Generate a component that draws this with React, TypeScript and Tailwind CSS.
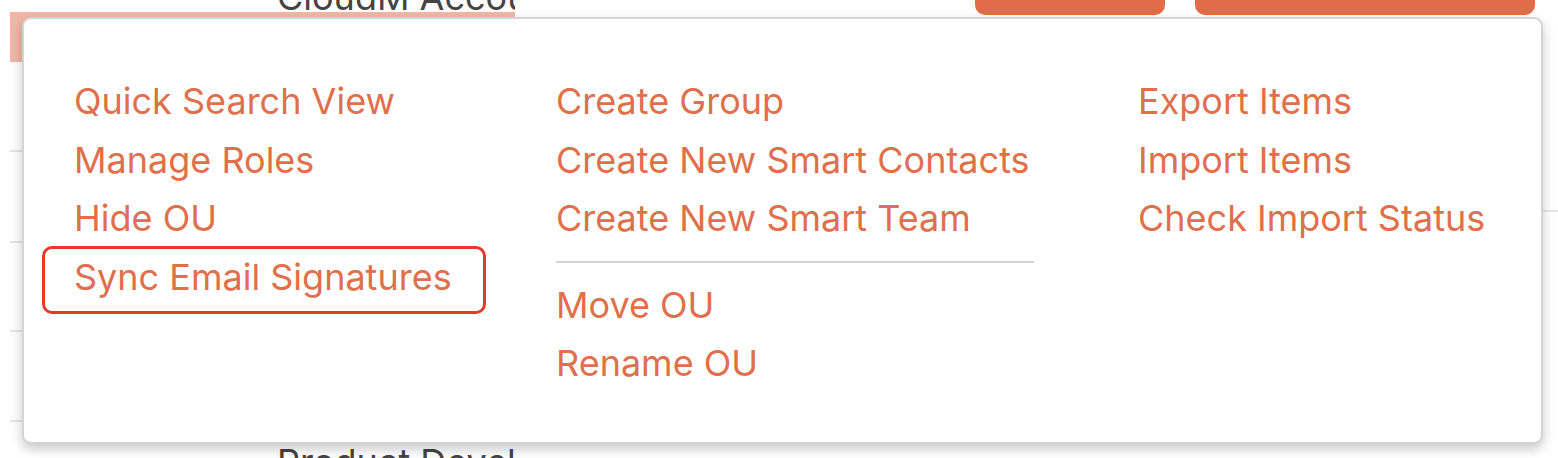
import React from 'react';

const columns: { items: string[]; after?: string[] }[] = [
  { items: ['Quick Search View', 'Manage Roles', 'Hide OU', 'Sync Email Signatures'] },
  {
    items: ['Create Group', 'Create New Smart Contacts', 'Create New Smart Team'],
    after: ['Move OU', 'Rename OU'],
  },
  { items: ['Export Items', 'Import Items', 'Check Import Status'] },
];

const widths = ['w-[482px]', 'w-[582px]', 'w-[360px]'];

function MenuItem({ label }: { label: string }) {
  const highlighted = label === 'Sync Email Signatures';
  return (
    <div className="relative h-[58.5px] flex items-center">
      {highlighted && (
        <div className="absolute left-[-32px] top-[-2px] w-[444px] h-[68px] rounded-[10px] border-[3px] border-[#e5392a]" />
      )}
      <span className="text-[36px] leading-none text-[#e06f4b] whitespace-nowrap">{label}</span>
    </div>
  );
}

export default function App() {
  return (
    <div
      className="relative w-[1558px] h-[458px] overflow-hidden bg-white"
      style={{ fontFamily: 'Inter, "Noto Sans", sans-serif' }}
    >
      {/* page behind the menu */}
      <div className="flex h-[62px]">
        <div className="relative ml-[10px] mt-[12px] w-[505px] h-[50px] bg-[#f1b7a6]">
          <div className="absolute left-[267px] top-[-33px] w-[238px] overflow-hidden text-[36px] leading-none text-[#444] whitespace-nowrap">CloudM Account</div>
        </div>
        <div className="ml-[460px] w-[190px] h-[15px] rounded-b-[10px] bg-[#e06d48]" />
        <div className="ml-[30px] w-[340px] h-[15px] rounded-b-[10px] bg-[#e06d48]" />
      </div>
      <div className="flex">
        <div className="ml-[10px] w-[505px] overflow-hidden">
          <div className="h-[90px] border-b-2 border-[#e4e4e4]" />
          <div className="h-[91px] border-b-2 border-[#e4e4e4]" />
          <div className="h-[89px] border-b-2 border-[#e4e4e4]" />
          <div className="h-[90px] border-b-2 border-[#e4e4e4]" />
          <div className="pl-[267px] pt-[22px] text-[36px] leading-none text-[#444] whitespace-nowrap">Product Development</div>
        </div>
        <div className="ml-auto w-[20px]">
          <div className="h-[150px] border-b-2 border-[#e8e8e8]" />
        </div>
      </div>

      {/* dropdown menu */}
      <div className="absolute left-[22px] top-[17px] w-[1521px] h-[427px] rounded-[9px] border-2 border-[#d4d4d4] bg-white shadow-[0_5px_12px_rgba(0,0,0,0.22)] pl-[50px] pt-[53px]">
        <div className="flex">
          {columns.map((col, i) => (
            <div key={i} className={widths[i]}>
              {col.items.map((label) => (
                <MenuItem key={label} label={label} />
              ))}
              {col.after && (
                <>
                  <div className="my-[13px] w-[478px] h-[2px] bg-[#d2d2d2]" />
                  {col.after.map((label) => (
                    <MenuItem key={label} label={label} />
                  ))}
                </>
              )}
            </div>
          ))}
        </div>
      </div>
    </div>
  );
}
